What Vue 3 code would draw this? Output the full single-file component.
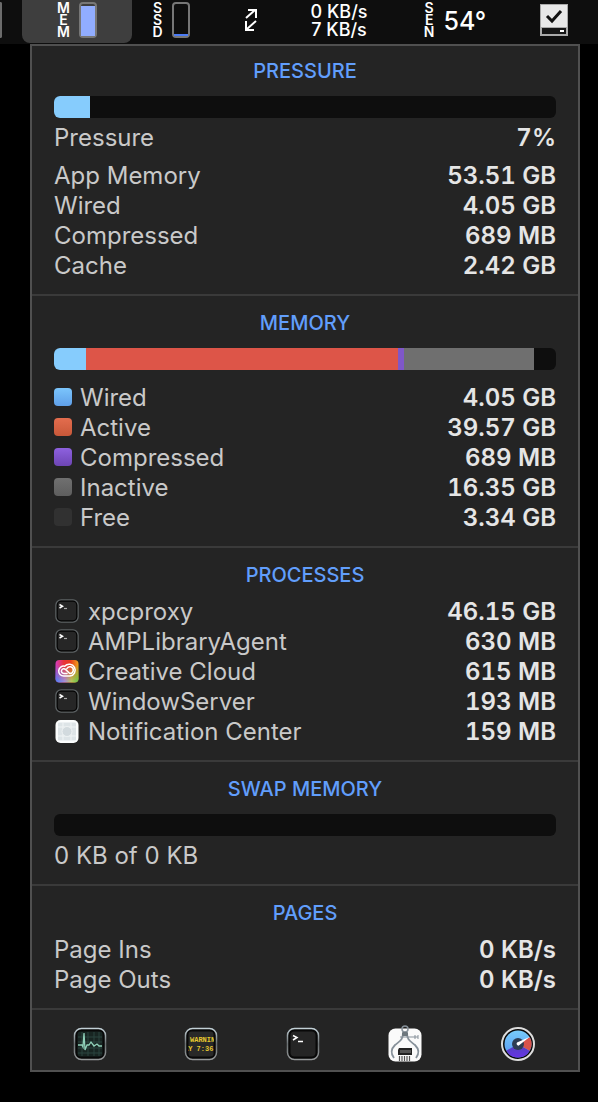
<template>
  <header class="menubar">
    <span class="edge" aria-hidden="true"></span>
    <button class="menu-item active" type="button" aria-label="Memory">
      <span class="stacked"><span v-for="(c, i) in 'MEM'" :key="i">{{ c }}</span></span>
      <span class="gauge"><span class="gauge-fill memory" :style="{ height: '94%' }"></span></span>
    </button>
    <button class="menu-item" type="button" aria-label="Disk">
      <span class="stacked"><span v-for="(c, i) in 'SSD'" :key="i">{{ c }}</span></span>
      <span class="gauge"><span class="gauge-fill disk" :style="{ height: '7%' }"></span></span>
    </button>
    <button class="menu-item" type="button" aria-label="Network activity">
      <svg width="14" height="24" viewBox="0 0 14 24" fill="none" stroke="#fff" stroke-width="2">
        <path d="M2 10 11 2M4 2h8v8M12 13 3 21M2 13v9h8" />
      </svg>
    </button>
    <button class="menu-item rates" type="button">
      <span>0 KB/s</span>
      <span>7 KB/s</span>
    </button>
    <button class="menu-item sensors" type="button">
      <span class="stacked"><span v-for="(c, i) in 'SEN'" :key="i">{{ c }}</span></span>
      <span class="temperature">54°</span>
    </button>
    <button class="menu-item" type="button" aria-label="Drive status">
      <svg width="28" height="32" viewBox="0 0 28 32">
        <path fill="#aaa" d="M0 0h28v32H0z" />
        <path fill="#e8e8e8" d="M1 1h26v22H1z" />
        <path fill="#151515" d="M2 24h24v6H2z" />
        <path fill="#fff" d="M20 26h4v2h-4z" />
        <path fill="none" stroke="#111" stroke-width="3" d="m7 12 5 5 9-10" />
      </svg>
    </button>
  </header>

  <main class="panel">
    <section class="section">
      <h2>PRESSURE</h2>
      <div class="bar" role="img" aria-label="Pressure 7%">
        <span class="segment wired" :style="{ width: '7.2%' }"></span>
      </div>
      <dl class="rows close">
        <div class="row"><dt>Pressure</dt><dd>7%</dd></div>
      </dl>
      <dl class="rows apart">
        <div v-for="item in usage" :key="item.label" class="row">
          <dt>{{ item.label }}</dt>
          <dd>{{ item.value }}</dd>
        </div>
      </dl>
    </section>

    <section class="section">
      <h2>MEMORY</h2>
      <div class="bar" role="img" aria-label="Memory breakdown">
        <span
          v-for="item in memory"
          :key="item.key"
          class="segment"
          :class="item.key"
          :style="{ width: item.share + '%' }"
        ></span>
      </div>
      <dl class="rows legend">
        <div v-for="item in memory" :key="item.key" class="row">
          <dt><span class="swatch" :class="item.key"></span>{{ item.label }}</dt>
          <dd>{{ item.value }}</dd>
        </div>
      </dl>
    </section>

    <section class="section">
      <h2>PROCESSES</h2>
      <dl class="rows listing">
        <div v-for="item in processes" :key="item.label" class="row">
          <dt>
            <svg v-if="item.icon === 'terminal'" width="26" height="26" viewBox="0 0 26 26" aria-hidden="true">
              <rect x="2" y="2" width="22" height="22" rx="5" fill="#262626" stroke="#5c6163" stroke-width="1.5" />
              <rect x="3.2" y="3.2" width="19.6" height="19.6" rx="4" fill="#262626" stroke="#050505" stroke-width="1.2" />
              <path d="m5.5 6.5 3 1.7-3 1.8" fill="none" stroke="#fff" stroke-width="1.5" />
              <path d="M10 10.5h3" stroke="#aaa" stroke-width="1.2" />
            </svg>
            <svg v-else-if="item.icon === 'cloud'" width="26" height="26" viewBox="0 0 26 26" aria-hidden="true">
              <defs>
                <linearGradient id="cc-top" x1="0" x2="1" y1="0" y2="0">
                  <stop offset="0" stop-color="#d63bc0" />
                  <stop offset=".35" stop-color="#e8353d" />
                  <stop offset=".65" stop-color="#e83c1c" />
                  <stop offset="1" stop-color="#f0a01c" />
                </linearGradient>
                <linearGradient id="cc-bottom" x1="0" x2="1" y1="0" y2="0">
                  <stop offset="0" stop-color="#4a7df5" />
                  <stop offset=".4" stop-color="#a58fd8" />
                  <stop offset=".7" stop-color="#b5c95a" />
                  <stop offset="1" stop-color="#5fc34a" />
                </linearGradient>
                <linearGradient id="cc-fade" x1="0" x2="0" y1="0" y2="1">
                  <stop offset=".25" stop-color="#000" />
                  <stop offset=".9" stop-color="#fff" />
                </linearGradient>
                <mask id="cc-mask"><rect width="26" height="26" fill="url(#cc-fade)" /></mask>
              </defs>
              <rect x="1.5" y="2" width="23" height="22.5" rx="4" fill="url(#cc-top)" />
              <rect x="1.5" y="2" width="23" height="22.5" rx="4" fill="url(#cc-bottom)" mask="url(#cc-mask)" />
              <g fill="none" stroke="#fff" stroke-width="1.5" stroke-linecap="round">
                <path d="M10.700 8.200a5 5 0 1 0-.9 9.900h6.200a6 6 0 1 0-5.300-9.900" />
                <path d="M13 15.500h-3.200a2.400 2.400 0 1 1 1.700-4.100l4 3.800" />
                <path d="M12.800 10.700a3.400 3.400 0 1 1 3.200 4.800" />
              </g>
            </svg>
            <svg v-else width="26" height="26" viewBox="0 0 26 26" aria-hidden="true">
              <rect x="1.5" y="2" width="23" height="23" rx="5" fill="#fbfdfd" />
              <rect x="4" y="4.5" width="18" height="18" rx="1" fill="#dde4e7" />
              <path d="M9 4.5v18M17 4.5v18M4 9h18M4 18h18" stroke="#f0f4f5" stroke-width="1" />
              <circle cx="13" cy="13.5" r="5" fill="#d2dade" stroke="#eef2f3" />
            </svg>
            {{ item.label }}
          </dt>
          <dd>{{ item.value }}</dd>
        </div>
      </dl>
    </section>

    <section class="section">
      <h2>SWAP MEMORY</h2>
      <div class="bar" role="img" aria-label="Swap memory unused"></div>
      <p class="swap">0 KB of 0 KB</p>
    </section>

    <section class="section">
      <h2>PAGES</h2>
      <dl class="rows listing">
        <div v-for="item in pages" :key="item.label" class="row">
          <dt>{{ item.label }}</dt>
          <dd>{{ item.value }}</dd>
        </div>
      </dl>
    </section>

    <nav class="dock" aria-label="Utilities">
      <button type="button" aria-label="Activity Monitor">
        <svg width="36" height="36" viewBox="0 0 36 36">
          <defs>
            <linearGradient id="rim" x1="0" x2="0" y1="0" y2="1">
              <stop offset="0" stop-color="#c2d0d6" />
              <stop offset=".5" stop-color="#6c7274" />
              <stop offset="1" stop-color="#96999a" />
            </linearGradient>
          </defs>
          <rect x="2.5" y="2.5" width="31" height="31" rx="7" fill="#080808" stroke="url(#rim)" stroke-width="1.5" />
          <rect x="5.5" y="5.5" width="25" height="25" rx="3" fill="#182522" />
          <path d="M10 6v24M16 6v24M22 6v24M27 6v24M6 11h24M6 16h24M6 22h24M6 27h24" stroke="#2b443e" stroke-width="1" />
          <path d="M6 19h4l1 2 1-14 1 17 2-5h2l2-3 3 4 3-2 2 2h3" fill="none" stroke="#8fd0b8" stroke-width="1.3" />
        </svg>
      </button>
      <button type="button" aria-label="Console">
        <svg width="36" height="36" viewBox="0 0 36 36">
          <rect x="2.5" y="2.5" width="31" height="31" rx="7" fill="#080808" stroke="url(#rim)" stroke-width="1.5" />
          <rect x="5.5" y="5.5" width="25" height="25" rx="3" fill="#292928" />
          <svg x="5" y="5" width="26" height="26" class="console-text">
            <text x="2" y="11">WARNIN</text>
            <text x="-4" y="20">AY 7:36</text>
          </svg>
        </svg>
      </button>
      <button type="button" aria-label="Terminal">
        <svg width="36" height="36" viewBox="0 0 36 36">
          <rect x="2.5" y="2.5" width="31" height="31" rx="7" fill="#080808" stroke="url(#rim)" stroke-width="1.5" />
          <rect x="5.5" y="5.5" width="25" height="25" rx="4" fill="#252525" />
          <path d="m8 9.5 4 2-4 2.500" fill="none" stroke="#fff" stroke-width="1.5" />
          <path d="M13 15.500h5" stroke="#fff" stroke-width="1.5" />
        </svg>
      </button>
      <button type="button" aria-label="System Information">
        <svg width="36" height="40" viewBox="0 0 36 40">
          <rect x="1.5" y="4.5" width="33" height="33" rx="7" fill="#fafafa" />
          <g fill="none" stroke="#87919a">
            <circle cx="18" cy="5" r="3" stroke-width="1.5" />
            <path stroke-width="1.8" d="M16 9c0 7-3 8-8 12-4 4-4 9-1 13M20 9c0 7 3 8 8 12 4 4 4 9 1 13" />
            <path stroke-width="1" d="M13 13h18M28 11v4M31 11v4" />
          </g>
          <rect x="15" y="8" width="6" height="4" rx="1" fill="#6d777d" />
          <path fill="#222" d="M12 24h13v7H11v-5z" />
          <path fill="#555" d="M13 26h11v3H13z" />
          <path d="M12.5 32v5M15 32v5M17.5 32v5M20 32v5M22.5 32v5" stroke="#555" stroke-width="1.2" />
        </svg>
      </button>
      <button type="button" aria-label="iStat Menus">
        <svg width="36" height="36" viewBox="0 0 36 36">
          <defs>
            <linearGradient id="dial-blue" x1="0" x2="0" y1="0" y2="1">
              <stop offset="0" stop-color="#78cbfa" />
              <stop offset="1" stop-color="#5598f4" />
            </linearGradient>
            <linearGradient id="dial-violet" x1="0" x2="0" y1="0" y2="1">
              <stop offset="0" stop-color="#5145ba" />
              <stop offset="1" stop-color="#6632e5" />
            </linearGradient>
          </defs>
          <circle cx="18" cy="18" r="16" fill="#080808" stroke="#ddd" stroke-width="2" />
          <circle cx="18" cy="18" r="13.5" fill="url(#dial-blue)" />
          <path fill="url(#dial-violet)" d="m18 18-11.700 6.750a13.500 13.500 0 0 0 23.400 0z" />
          <path fill="#d9534b" d="m18 18 11.700-6.750a13.500 13.500 0 0 1 0 13.500z" />
          <circle cx="18" cy="18" r="6" fill="#2d3d53" />
          <path fill="#fff" d="m17 16.500 12.500-5.500-11 8.700a2 2 0 0 1-1.500-3.200z" />
        </svg>
      </button>
    </nav>
  </main>
</template>

<script setup>
const usage = [
  { label: 'App Memory', value: '53.51 GB' },
  { label: 'Wired', value: '4.05 GB' },
  { label: 'Compressed', value: '689 MB' },
  { label: 'Cache', value: '2.42 GB' },
];

const memory = [
  { key: 'wired', label: 'Wired', value: '4.05 GB', share: 6.4 },
  { key: 'in-use', label: 'Active', value: '39.57 GB', share: 62.1 },
  { key: 'compressed', label: 'Compressed', value: '689 MB', share: 1.2 },
  { key: 'inactive', label: 'Inactive', value: '16.35 GB', share: 25.9 },
  { key: 'free', label: 'Free', value: '3.34 GB', share: 4.4 },
];

const processes = [
  { label: 'xpcproxy', value: '46.15 GB', icon: 'terminal' },
  { label: 'AMPLibraryAgent', value: '630 MB', icon: 'terminal' },
  { label: 'Creative Cloud', value: '615 MB', icon: 'cloud' },
  { label: 'WindowServer', value: '193 MB', icon: 'terminal' },
  { label: 'Notification Center', value: '159 MB', icon: 'widget' },
];

const pages = [
  { label: 'Page Ins', value: '0 KB/s' },
  { label: 'Page Outs', value: '0 KB/s' },
];
</script>

<style>
body {
  background: #000;
  font-family: Inter, "Liberation Sans", sans-serif;
}
</style>

<style scoped>
button {
  padding: 0;
  border: 0;
  background: none;
  color: inherit;
  font: inherit;
}
svg {
  display: block;
  flex: none;
}
.menubar {
  display: grid;
  grid-template-columns: 22fr 110fr 78fr 82fr 94fr 138fr 60fr 14fr;
  height: 44px;
  background: #0e0e0e;
  color: #fff;
}
.edge {
  width: 2px;
  height: 36px;
  margin-top: 2px;
  box-sizing: border-box;
  border: 2px solid #6c6c6c;
  border-left: 0;
  border-radius: 0 3px 3px 0;
}
.menu-item {
  display: flex;
  align-items: center;
  justify-content: center;
  gap: 9px;
  padding-bottom: 4px;
}
.menu-item.active {
  margin-bottom: 1px;
  padding-bottom: 3px;
  border-radius: 0 0 8px 8px;
  background: #3e3e3e;
}
.stacked {
  display: flex;
  flex-direction: column;
  align-items: center;
  font-size: 14px;
  font-weight: 600;
  line-height: 12px;
}
.gauge {
  display: flex;
  align-items: flex-end;
  box-sizing: border-box;
  width: 18px;
  height: 36px;
  border: 2px solid #777;
  border-radius: 4px;
}
.gauge-fill {
  width: 100%;
}
.gauge-fill.memory {
  background: #91adff;
}
.gauge-fill.disk {
  background: #4b7bf5;
}
.menu-item.rates {
  flex-direction: column;
  gap: 0;
  padding-bottom: 2px;
  font-size: 18px;
  font-weight: 500;
  line-height: 18px;
}
.temperature {
  padding-top: 2px;
  font-size: 25px;
  font-weight: 500;
}
.panel {
  margin: 0 18px 0 30px;
  border: 2px solid #505050;
  background: #242424;
}
.section {
  padding: 12px 22px 13px;
  border-bottom: 2px solid #3a3a3a;
}
.section:first-child {
  padding-top: 10px;
}
h2 {
  margin: 0;
  color: #619efc;
  font-size: 20px;
  font-weight: 500;
  line-height: 30px;
  text-align: center;
}
.bar {
  display: flex;
  height: 22px;
  margin-top: 10px;
  overflow: hidden;
  border-radius: 6px;
  background: #0e0e0e;
}
.segment.wired {
  background: #86ccfd;
}
.segment.in-use {
  background: #dd5548;
}
.segment.compressed {
  background: #7f57c8;
}
.segment.inactive {
  background: #6f6f6f;
}
.rows {
  margin: 0;
}
.rows.close {
  margin-top: 5px;
}
.rows.apart {
  margin-top: 8px;
}
.rows.legend {
  margin-top: 13px;
}
.rows.listing {
  margin-top: 7px;
}
.row {
  display: flex;
  justify-content: space-between;
  font-size: 24px;
  line-height: 30px;
}
dt {
  display: flex;
  align-items: center;
  color: #c9c9c9;
}
dt svg {
  margin: 0 8px 2px 0;
}
dd {
  margin: 0;
  color: #e5e5e5;
  font-weight: 600;
  font-variant-numeric: tabular-nums;
}
.swatch {
  width: 18px;
  height: 18px;
  margin: 0 8px 2px 0;
  border-radius: 4px;
}
.swatch.wired {
  background: linear-gradient(#7bc5fc, #5f9fe8);
}
.swatch.in-use {
  background: linear-gradient(#e36d4e, #c85839);
}
.swatch.compressed {
  background: linear-gradient(#8e61df, #6d45b4);
}
.swatch.inactive {
  background: linear-gradient(#707070, #5e5e5e);
}
.swatch.free {
  background: #313131;
}
.swap {
  margin: 5px 0 0;
  color: #c9c9c9;
  font-size: 24px;
  line-height: 30px;
}
.dock {
  display: grid;
  grid-template-columns: 116fr 106fr 98fr 106fr 120fr;
  height: 60px;
}
.dock button {
  display: flex;
  align-items: center;
  justify-content: center;
  padding-top: 8px;
}
.console-text {
  fill: #e6c72f;
  font-family: "Liberation Mono", monospace;
  font-size: 7px;
  font-weight: 700;
}
</style>
